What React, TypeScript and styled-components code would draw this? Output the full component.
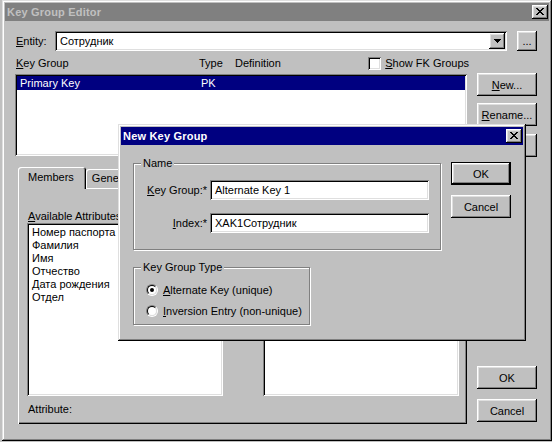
import React from "react";
import styled, { createGlobalStyle, css } from "styled-components";

const Global = createGlobalStyle`
  html, body { margin: 0; padding: 0; background: #c0c0c0; }
  body {
    font-family: "Liberation Sans", Arial, sans-serif;
    font-size: 11px;
    color: #000;
  }
  #root { width: 552px; height: 442px; overflow: hidden; }
  u { text-decoration: underline; text-underline-offset: 1px; }
`;

const raised = css`
  box-shadow: inset -1px -1px #000, inset 1px 1px #fff, inset -2px -2px #808080,
    inset 2px 2px #dfdfdf;
`;
const sunken = css`
  box-shadow: inset 1px 1px #808080, inset -1px -1px #fff, inset 2px 2px #000,
    inset -2px -2px #dfdfdf;
`;
const frame = css`
  box-shadow: inset -1px -1px #000, inset 1px 1px #dfdfdf, inset -2px -2px #808080,
    inset 2px 2px #fff;
`;

const Window = styled.div`
  position: relative;
  margin-left: 2px;
  width: 550px;
  height: 441px;
  box-sizing: border-box;
  padding: 3px;
  background: #c0c0c0;
  ${frame}
  display: flex;
  flex-direction: column;
`;

const TitleBar = styled.div<{ $active?: boolean }>`
  flex: none;
  height: 18px;
  box-sizing: border-box;
  padding: 0 1px 0 2px;
  display: flex;
  align-items: center;
  justify-content: space-between;
  background: ${(p) => (p.$active ? "#000080" : "#808080")};
  color: ${(p) => (p.$active ? "#fff" : "#c0c0c0")};
  font-weight: bold;
  font-size: 11px;
  letter-spacing: 0.2px;
`;

const CloseBtn = styled.div`
  width: 16px;
  height: 14px;
  background: #c0c0c0;
  ${raised}
  display: flex;
  align-items: center;
  justify-content: center;
  padding-bottom: 1px;
  box-sizing: border-box;
`;

const PixelGlyph: React.FC<{ rows: string[] }> = ({ rows }) => (
  <svg
    width={rows[0].length}
    height={rows.length}
    viewBox={`0 0 ${rows[0].length} ${rows.length}`}
    shapeRendering="crispEdges"
  >
    {rows.map((r, y) =>
      r.split("").map((c, x) =>
        c === "X" ? <rect key={`${x}-${y}`} x={x} y={y} width={1} height={1} fill="#000" /> : null
      )
    )}
  </svg>
);

const closeRows = [
  "XX....XX",
  ".XX..XX.",
  "..XXXX..",
  "...XX...",
  "..XXXX..",
  ".XX..XX.",
  "XX....XX",
];
const arrowRows = ["XXXXXXX", ".XXXXX.", "..XXX..", "...X..."];

const Content = styled.div`
  flex: 1;
  display: flex;
  flex-direction: column;
  padding: 10px 11px 0 10px;
`;

const EntityRow = styled.div`
  display: flex;
  align-items: center;
  height: 20px;
`;

const FieldLabel = styled.span<{ $w?: number; $right?: boolean }>`
  flex: none;
  width: ${(p) => (p.$w ? `${p.$w}px` : "auto")};
  padding-left: ${(p) => (p.$right ? 0 : 1)}px;
  box-sizing: border-box;
  text-align: ${(p) => (p.$right ? "right" : "left")};
  white-space: nowrap;
`;

const Combo = styled.div`
  width: 452px;
  height: 20px;
  box-sizing: border-box;
  padding: 2px;
  background: #fff;
  ${sunken}
  display: flex;
  align-items: center;
`;

const ComboText = styled.span`
  flex: 1;
  padding-left: 3px;
`;

const ComboButton = styled.div`
  width: 16px;
  height: 16px;
  background: #c0c0c0;
  ${raised}
  display: flex;
  align-items: center;
  justify-content: center;
`;

const Button = styled.div<{ $w?: number; $h?: number; $default?: boolean }>`
  flex: none;
  width: ${(p) => p.$w ?? 60}px;
  height: ${(p) => p.$h ?? 23}px;
  box-sizing: border-box;
  background: #c0c0c0;
  display: flex;
  align-items: center;
  justify-content: center;
  white-space: nowrap;
  ${(p) =>
    p.$default
      ? css`
          box-shadow: inset 0 0 0 1px #000, inset -2px -2px #000, inset 2px 2px #fff,
            inset -3px -3px #808080, inset 3px 3px #dfdfdf;
        `
      : raised}
`;

const Body = styled.div`
  margin-top: 5px;
  flex: none;
  display: grid;
  grid-template-columns: 452px 60px;
  column-gap: 10px;
`;

const LeftCol = styled.div`
  display: flex;
  flex-direction: column;
`;

const RightCol = styled.div<{ $top: number }>`
  display: flex;
  flex-direction: column;
  padding-top: ${(p) => p.$top}px;
  gap: 7px;
`;

const HeaderRow = styled.div`
  height: 14px;
  display: flex;
  align-items: center;
`;

const HeaderCell = styled.span<{ $w?: number }>`
  flex: ${(p) => (p.$w ? "none" : "1")};
  width: ${(p) => (p.$w ? `${p.$w}px` : "auto")};
`;

const CheckLabel = styled.label`
  display: flex;
  align-items: center;
  gap: 4px;
  margin-right: -2px;
`;

const CheckBox = styled.span`
  width: 13px;
  height: 13px;
  box-sizing: border-box;
  background: #fff;
  ${sunken}
`;

const ListBox = styled.div<{ $h: number; $top?: number }>`
  height: ${(p) => p.$h}px;
  margin-top: ${(p) => p.$top ?? 0}px;
  box-sizing: border-box;
  padding: 2px;
  background: #fff;
  ${sunken}
  overflow: hidden;
`;

const ListRow = styled.div<{ $selected?: boolean; $h?: number }>`
  height: ${(p) => p.$h ?? 13}px;
  display: flex;
  align-items: center;
  padding-left: 3px;
  white-space: nowrap;
  background: ${(p) => (p.$selected ? "#000080" : "transparent")};
  color: ${(p) => (p.$selected ? "#fff" : "#000")};
`;

const RowCell = styled.span<{ $w?: number }>`
  flex: ${(p) => (p.$w ? "none" : "1")};
  width: ${(p) => (p.$w ? `${p.$w}px` : "auto")};
`;

const Tabs = styled.div`
  margin: 11px 0 0 3px;
  display: flex;
  flex-direction: column;
`;

const TabStrip = styled.div`
  height: 21px;
  display: flex;
  align-items: flex-end;
`;

const Tab = styled.div<{ $active?: boolean }>`
  position: relative;
  z-index: ${(p) => (p.$active ? 1 : 0)};
  height: ${(p) => (p.$active ? 22 : 19)}px;
  margin-bottom: ${(p) => (p.$active ? -1 : 0)}px;
  box-sizing: border-box;
  padding: ${(p) => (p.$active ? "4px 12px 0 10px" : "3px 8px 0 6px")};
  background: #c0c0c0;
  border-radius: 3px 3px 0 0;
  box-shadow: inset 1px 1px #fff, inset -1px 0 #000, inset -2px 0 #808080;
`;

const Panel = styled.div`
  height: 236px;
  box-sizing: border-box;
  padding: 22px 8px 0 9px;
  box-shadow: inset 1px 1px #fff, inset -1px -1px #000, inset -2px -2px #808080;
  display: flex;
  flex-direction: column;
`;

const PanelGrid = styled.div`
  display: grid;
  grid-template-columns: 196px 196px;
  grid-template-rows: 13px 173px;
  column-gap: 40px;
`;

const Caption = styled.div<{ $top?: number }>`
  height: 13px;
  line-height: 13px;
  margin-top: ${(p) => p.$top ?? 0}px;
  padding-left: 1px;
  white-space: nowrap;
`;

/* ---------- dialog ---------- */

const Dialog = styled.div`
  position: absolute;
  left: 116px;
  top: 124px;
  z-index: 10;
  width: 408px;
  height: 217px;
  box-sizing: border-box;
  padding: 3px;
  background: #c0c0c0;
  ${frame}
  display: flex;
  flex-direction: column;
`;

const DialogBody = styled.div`
  display: grid;
  grid-template-columns: 308px 60px;
  column-gap: 10px;
  padding: 18px 12px 0 12px;
  align-items: start;
`;

const DialogButtons = styled.div`
  margin-top: -1px;
  display: flex;
  flex-direction: column;
  gap: 10px;
`;

const GroupColumn = styled.div`
  display: flex;
  flex-direction: column;
  gap: 17px;
`;

const GroupBox = styled.div<{ $w: number; $pad: string; $gap: number }>`
  position: relative;
  width: ${(p) => p.$w}px;
  box-sizing: border-box;
  border: 1px solid #808080;
  box-shadow: 1px 1px #fff, inset 1px 1px #fff;
  padding: ${(p) => p.$pad};
  display: flex;
  flex-direction: column;
  gap: ${(p) => p.$gap}px;
`;

const Legend = styled.span`
  position: absolute;
  top: -7px;
  left: 7px;
  padding: 0 2px;
  height: 13px;
  line-height: 13px;
  background: #c0c0c0;
`;

const FormRow = styled.div`
  display: grid;
  grid-template-columns: 61px 219px;
  column-gap: 3px;
  align-items: center;
`;

const TextInput = styled.div`
  height: 20px;
  box-sizing: border-box;
  padding: 2px 2px 2px 5px;
  background: #fff;
  ${sunken}
  display: flex;
  align-items: center;
  white-space: nowrap;
`;

const RadioRow = styled.div`
  height: 17px;
  display: flex;
  align-items: center;
  gap: 5px;
  white-space: nowrap;
`;

const RadioOuter = styled.span`
  width: 12px;
  height: 12px;
  box-sizing: border-box;
  border-radius: 50%;
  border: 1px solid;
  border-color: #808080 #fff #fff #808080;
  flex: none;
`;

const RadioInner = styled.span<{ $checked?: boolean }>`
  display: flex;
  width: 10px;
  height: 10px;
  box-sizing: border-box;
  border-radius: 50%;
  border: 1px solid;
  border-color: #000 #dfdfdf #dfdfdf #000;
  background: #fff;
  align-items: center;
  justify-content: center;
  &::after {
    content: "";
    display: ${(p) => (p.$checked ? "block" : "none")};
    width: 4px;
    height: 4px;
    border-radius: 50%;
    background: #000;
  }
`;

const Radio: React.FC<{ checked?: boolean; children: React.ReactNode }> = ({
  checked,
  children,
}) => (
  <RadioRow>
    <RadioOuter>
      <RadioInner $checked={checked} />
    </RadioOuter>
    <span>{children}</span>
  </RadioRow>
);

const attributes = ["Номер паспорта", "Фамилия", "Имя", "Отчество", "Дата рождения", "Отдел"];

export default function App() {
  return (
    <>
      <Global />
      <Window>
        <TitleBar>
          <span>Key Group Editor</span>
          <CloseBtn>
            <PixelGlyph rows={closeRows} />
          </CloseBtn>
        </TitleBar>
        <Content>
          <EntityRow>
            <FieldLabel $w={40}>
              <u>E</u>ntity:
            </FieldLabel>
            <Combo>
              <ComboText>Сотрудник</ComboText>
              <ComboButton>
                <PixelGlyph rows={arrowRows} />
              </ComboButton>
            </Combo>
            <Button $w={20} $h={20} style={{ marginLeft: 10 }}>
              ...
            </Button>
          </EntityRow>
          <Body>
            <LeftCol>
              <HeaderRow>
                <HeaderCell $w={183} style={{ paddingLeft: 1 }}>
                  <u>K</u>ey Group
                </HeaderCell>
                <HeaderCell $w={36}>Type</HeaderCell>
                <HeaderCell>Definition</HeaderCell>
                <CheckLabel>
                  <CheckBox />
                  <span>
                    <u>S</u>how FK Groups
                  </span>
                </CheckLabel>
              </HeaderRow>
              <ListBox $h={82} $top={4}>
                <ListRow $selected $h={14}>
                  <RowCell $w={181}>Primary Key</RowCell>
                  <RowCell>PK</RowCell>
                </ListRow>
              </ListBox>
              <Tabs>
                <TabStrip>
                  <Tab $active>Members</Tab>
                  <Tab>General</Tab>
                </TabStrip>
                <Panel>
                  <PanelGrid>
                    <Caption>
                      <u>A</u>vailable Attributes
                    </Caption>
                    <Caption />
                    <ListBox $h={173}>
                      {attributes.map((a) => (
                        <ListRow key={a}>{a}</ListRow>
                      ))}
                    </ListBox>
                    <ListBox $h={173} />
                  </PanelGrid>
                  <Caption $top={7}>Attribute:</Caption>
                </Panel>
              </Tabs>
            </LeftCol>
            <RightCol $top={17}>
              <Button>
                <span>
                  <u>N</u>ew...
                </span>
              </Button>
              <Button>
                <span>
                  <u>R</u>ename...
                </span>
              </Button>
              <Button style={{ marginTop: 1 }} />
              <Button style={{ marginTop: "auto" }}>OK</Button>
              <Button style={{ marginTop: 3, marginBottom: 2 }}>Cancel</Button>
            </RightCol>
          </Body>
        </Content>

        <Dialog>
          <TitleBar $active>
            <span>New Key Group</span>
            <CloseBtn>
              <PixelGlyph rows={closeRows} />
            </CloseBtn>
          </TitleBar>
          <DialogBody>
            <GroupColumn>
              <GroupBox $w={308} $pad="16px 0 16px 12px" $gap={13}>
                <Legend>Name</Legend>
                <FormRow>
                  <FieldLabel $right>
                    <u>K</u>ey Group:*
                  </FieldLabel>
                  <TextInput>Alternate Key 1</TextInput>
                </FormRow>
                <FormRow>
                  <FieldLabel $right>
                    <u>I</u>ndex:*
                  </FieldLabel>
                  <TextInput>XAK1Сотрудник</TextInput>
                </FormRow>
              </GroupBox>
              <GroupBox $w={177} $pad="13px 0 5px 12px" $gap={4}>
                <Legend>Key Group Type</Legend>
                <Radio checked>
                  <u>A</u>lternate Key (unique)
                </Radio>
                <Radio>
                  <u>I</u>nversion Entry (non-unique)
                </Radio>
              </GroupBox>
            </GroupColumn>
            <DialogButtons>
              <Button $default>OK</Button>
              <Button>Cancel</Button>
            </DialogButtons>
          </DialogBody>
        </Dialog>
      </Window>
    </>
  );
}
